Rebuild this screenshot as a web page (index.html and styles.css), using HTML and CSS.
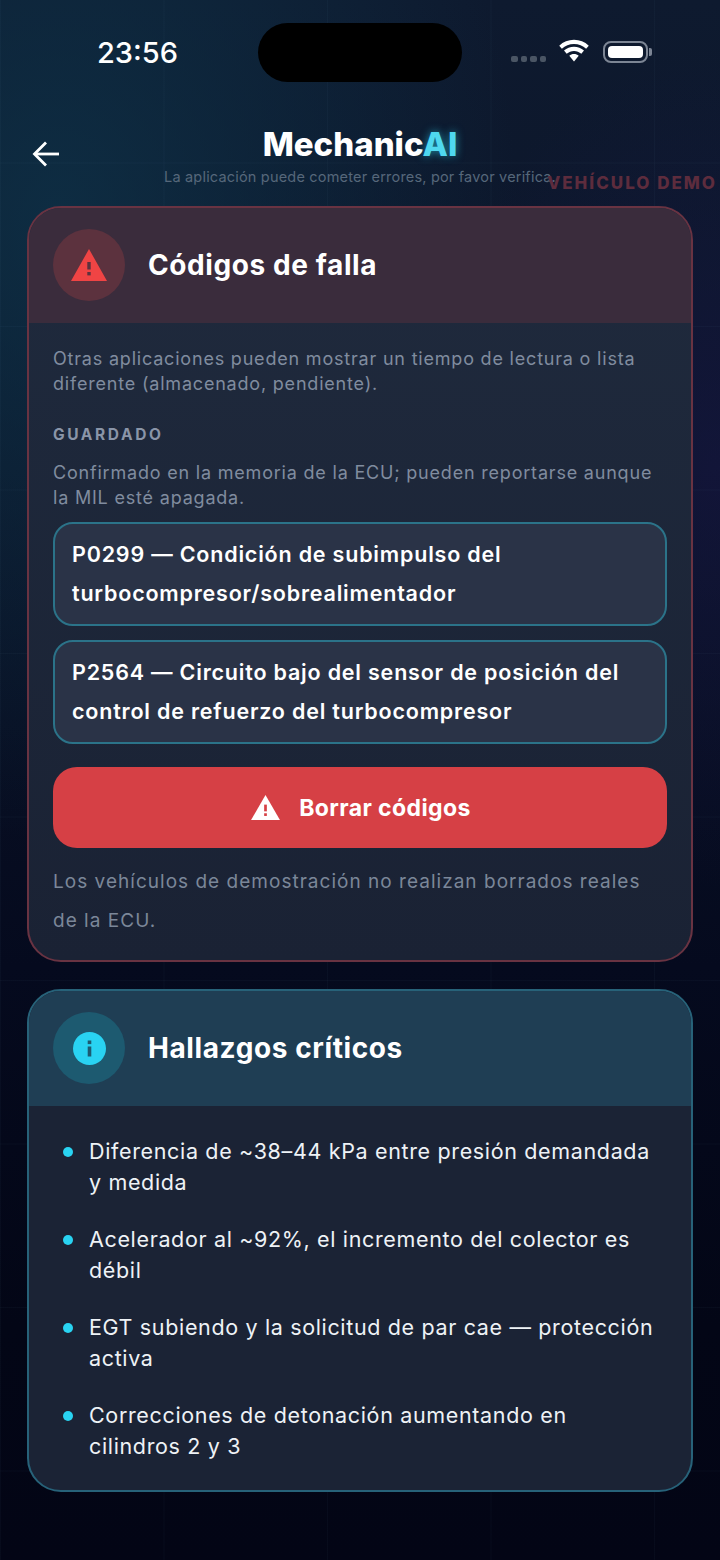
FILE: index.html
```html
<!DOCTYPE html>
<html lang="es">
<head>
    <meta charset="UTF-8">
    <meta name="viewport" content="width=device-width, initial-scale=1.0">
    <title>MechanicAI</title>
    <link rel="stylesheet" href="styles.css">
</head>
<body>
    <div class="screen">
        <div class="status-bar">
            <span class="time">23:56</span>
            <div class="island"></div>
            <div class="status-icons">
                <div class="signal"><i></i><i></i><i></i><i></i></div>
                <svg class="wifi" width="34" height="26" viewBox="0 0 32 24">
                    <path d="M16 4.500c4.400 0 8.400 1.700 11.400 4.500l2.500-3C26.100 2.500 21.300.5 16 .5S5.900 2.500 2.100 6l2.500 3C7.600 6.200 11.600 4.500 16 4.500z" fill="#fff"/>
                    <path d="M16 11c2.600 0 5 1 6.900 2.700l2.500-3C22.800 8.400 19.600 7.100 16 7.100s-6.800 1.300-9.400 3.600l2.500 3C11 12 13.400 11 16 11z" fill="#fff"/>
                    <path d="M16 13.800c-1.700 0-3.200.6-4.400 1.700L16 21l4.400-5.500c-1.200-1.100-2.700-1.700-4.400-1.700z" fill="#fff"/>
                </svg>
                <div class="battery"><div class="battery-fill"></div></div>
            </div>
        </div>

        <header class="app-header">
            <button class="back-btn" aria-label="Volver">
                <svg width="30" height="30" viewBox="0 0 30 30" fill="none" stroke="#fff" stroke-width="2.800">
                    <path d="M28 15H4"/>
                    <path d="M15 3.500 3.500 15 15 26.500"/>
                </svg>
            </button>
            <div class="brand">
                <h1>Mechanic<span>AI</span></h1>
                <p>La aplicación puede cometer errores, por favor verifica.</p>
            </div>
            <span class="demo-tag">VEHÍCULO DEMO</span>
        </header>

        <section class="card card-red">
            <div class="card-head">
                <div class="icon-circle">
                    <svg width="36" height="32" viewBox="0 0 36 32">
                        <path d="M18 0 36 32H0z" fill="#f04444"/>
                        <rect x="16.300" y="13" width="3.400" height="7.500" fill="#5c323e"/>
                        <rect x="16.300" y="23" width="3.400" height="3.400" fill="#5c323e"/>
                    </svg>
                </div>
                <h2>Códigos de falla</h2>
            </div>
            <div class="card-body">
                <p class="muted">Otras aplicaciones pueden mostrar un tiempo de lectura o lista diferente (almacenado, pendiente).</p>
                <h3>GUARDADO</h3>
                <p class="muted tight">Confirmado en la memoria de la ECU; pueden reportarse aunque la MIL esté apagada.</p>
                <div class="code-box">P0299 — Condición de subimpulso del turbocompresor/sobrealimentador</div>
                <div class="code-box">P2564 — Circuito bajo del sensor de posición del control de refuerzo del turbocompresor</div>
                <button class="clear-btn">
                    <svg width="29" height="25" viewBox="0 0 30 26">
                        <path d="M15 0 30 26H0z" fill="#fff"/>
                        <rect x="13.600" y="10" width="2.800" height="7" fill="#d64045"/>
                        <rect x="13.600" y="19" width="2.800" height="2.800" fill="#d64045"/>
                    </svg>
                    Borrar códigos
                </button>
                <p class="note">Los vehículos de demostración no realizan borrados reales de la ECU.</p>
            </div>
        </section>

        <section class="card card-cyan">
            <div class="card-head">
                <div class="icon-circle">
                    <svg width="33" height="33" viewBox="0 0 33 33">
                        <circle cx="16.500" cy="16.500" r="16.500" fill="#29d3f2"/>
                        <rect x="14.700" y="14.500" width="3.600" height="10" fill="#1d5a70"/>
                        <rect x="14.700" y="8.500" width="3.600" height="3.600" fill="#1d5a70"/>
                    </svg>
                </div>
                <h2>Hallazgos críticos</h2>
            </div>
            <ul class="findings">
                <li>Diferencia de ~38–44 kPa entre presión demandada y medida</li>
                <li>Acelerador al ~92%, el incremento del colector es débil</li>
                <li>EGT subiendo y la solicitud de par cae — protección activa</li>
                <li>Correcciones de detonación aumentando en cilindros 2 y 3</li>
            </ul>
        </section>
    </div>
</body>
</html>
```

FILE: styles.css
```css
* {
    box-sizing: border-box;
}
body {
    margin: 0;
    font-family: Inter, "Liberation Sans", sans-serif;
    background: #030616;
    color: #fff;
}
.screen {
    position: relative;
    width: 720px;
    height: 1560px;
    overflow: hidden;
    padding: 0 27px;
    background:
        linear-gradient(rgba(120, 170, 200, 0.04) 1px, transparent 1px) 0 -1px / 163.500px 163.500px,
        linear-gradient(90deg, rgba(120, 170, 200, 0.04) 1px, transparent 1px) 0 0 / 163.500px 163.500px,
        radial-gradient(ellipse 460px 620px at 8% 14%, rgba(14, 50, 72, 0.8) 0%, rgba(14, 50, 72, 0) 100%),
        radial-gradient(ellipse 300px 420px at 100% 30%, rgba(24, 22, 70, 0.55) 0%, rgba(24, 22, 70, 0) 100%),
        linear-gradient(180deg, #0e1a2f 0%, #0b1428 30%, #050a1e 62%, #030616 85%, #030515 100%);
}

/* status bar */
.status-bar {
    display: grid;
    grid-template-columns: 231px 204px 1fr;
    align-items: center;
    height: 59px;
    margin-top: 23px;
}
.time {
    padding-left: 70px;
    font-size: 29px;
    font-weight: 500;
    margin-top: -1px;
}
.island {
    height: 59px;
    border-radius: 30px;
    background: #000;
}
.status-icons {
    display: flex;
    align-items: center;
    padding-left: 49px;
    margin-top: -1px;
}
.signal {
    display: flex;
    gap: 3px;
    margin-top: 14px;
    margin-right: 11px;
}
.signal i {
    width: 6.500px;
    height: 6px;
    border-radius: 2px;
    background: #4a5564;
}
.wifi {
    margin-top: -1px;
    margin-right: 12px;
}
.battery {
    position: relative;
    width: 45px;
    height: 22px;
    padding: 3px;
    border: 2px solid #7c8594;
    border-radius: 8px;
}
.battery::after {
    content: "";
    position: absolute;
    right: -6px;
    top: 5px;
    width: 3px;
    height: 8px;
    border-radius: 0 2px 2px 0;
    background: #7c8594;
}
.battery-fill {
    height: 100%;
    border-radius: 4px;
    background: #fff;
}

/* app header */
.app-header {
    position: relative;
    height: 124px;
    padding-top: 42px;
    text-align: center;
}
.back-btn {
    position: absolute;
    left: 4px;
    top: 57px;
    padding: 0;
    background: none;
    border: none;
    cursor: pointer;
}
.brand h1 {
    margin: 0;
    font-size: 33px;
    line-height: 40px;
    font-weight: 800;
}
.brand h1 span {
    color: #4fd8ef;
    text-shadow: 0 0 8px rgba(41, 211, 242, 0.6);
}
.brand p {
    margin: 3px 0 0;
    font-size: 14.500px;
    line-height: 20px;
    letter-spacing: 0.190px;
    color: #56677a;
}
.demo-tag {
    position: absolute;
    right: -24px;
    top: 90px;
    font-size: 17px;
    line-height: 22px;
    font-weight: 800;
    letter-spacing: 2px;
    color: #5d2c3d;
}

/* cards */
.card {
    border-radius: 34px;
    overflow: hidden;
    border: 2px solid;
}
.card-red {
    border-color: #693342;
    margin-bottom: 27px;
    background: linear-gradient(180deg, #1f2a3d 0%, #1a2234 100%);
}
.card-cyan {
    border-color: #276279;
    background: #1b2335;
}
.card-head {
    display: flex;
    align-items: center;
    gap: 23px;
    height: 115px;
    padding: 0 24px 1px;
}
.card-red .card-head {
    background: #3a2c3c;
}
.card-cyan .card-head {
    background: #1f3e54;
}
.icon-circle {
    display: flex;
    align-items: center;
    justify-content: center;
    width: 72px;
    height: 72px;
    border-radius: 50%;
}
.card-red .icon-circle {
    background: #5c323e;
}
.card-cyan .icon-circle {
    background: #1d5a70;
}
.card-head h2 {
    margin: 0;
    font-size: 28px;
    line-height: 34px;
    font-weight: 700;
    letter-spacing: 0.600px;
}
.card-body {
    padding: 23px 24px 20px;
}
.muted {
    margin: 0;
    font-size: 18px;
    line-height: 25px;
    letter-spacing: 0.800px;
    color: #808c9f;
}
.card-body h3 {
    margin: 29px 0 15px;
    font-size: 15.500px;
    line-height: 20px;
    font-weight: 700;
    letter-spacing: 2.600px;
    color: #8a95a8;
}
.tight {
    margin-bottom: 12px;
}
.code-box {
    margin-bottom: 14px;
    padding: 11px 18px 11px 17px;
    border: 2px solid #2b7389;
    border-radius: 20px;
    background: #2a3347;
    font-size: 21.500px;
    line-height: 39px;
    font-weight: 600;
    letter-spacing: 0.800px;
}
.clear-btn {
    display: flex;
    align-items: center;
    justify-content: center;
    gap: 19px;
    width: 100%;
    height: 81px;
    margin-top: 23px;
    padding: 0 0 0 2px;
    border: none;
    border-radius: 24px;
    background: #d64045;
    color: #fff;
    font-family: inherit;
    font-size: 23px;
    font-weight: 700;
    letter-spacing: 0.400px;
    cursor: pointer;
}
.note {
    margin: 14px 0 0;
    font-size: 19px;
    line-height: 39px;
    letter-spacing: 1.020px;
    color: #7b8799;
}
.findings {
    list-style: none;
    margin: 0;
    padding: 30px 36px 28px 60px;
}
.findings li {
    position: relative;
    margin-bottom: 26px;
    font-size: 21.500px;
    line-height: 31px;
    letter-spacing: 0.650px;
    color: #eef2f6;
}
.findings li:last-child {
    margin-bottom: 0;
}
.findings li::before {
    content: "";
    position: absolute;
    left: -26px;
    top: 11px;
    width: 10px;
    height: 10px;
    border-radius: 50%;
    background: #29d3f2;
}
```
